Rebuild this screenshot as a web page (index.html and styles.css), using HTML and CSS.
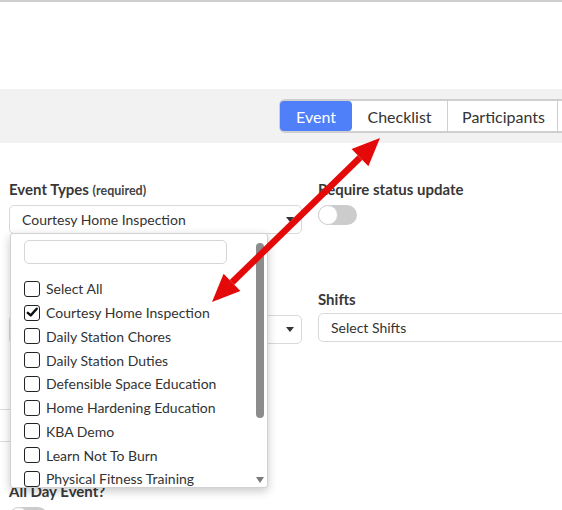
FILE: index.html
```html
<!DOCTYPE html>
<html lang="en">
<head>
<meta charset="utf-8">
<title>Event</title>
<link rel="stylesheet" href="styles.css">
</head>
<body>
<div class="topline"></div>
<div class="header"></div>
<div class="toolbar">
  <div class="tabs">
    <div class="tab active">Event</div>
    <div class="tab t-check">Checklist</div>
    <div class="tab divided t-part">Participants</div>
    <div class="tab divided t-more"></div>
  </div>
</div>
<div class="form">
  <div class="col">
    <div class="field first">
      <div class="label">Event Types <span class="req">(required)</span></div>
      <div class="select"><span>Courtesy Home Inspection</span><span class="caret"></span></div>
      <div class="dropdown">
        <div class="search"></div>
        <ul class="options">
          <li><span class="cb"></span>Select All</li>
          <li><span class="cb checked"><svg viewBox="0 0 16 16" width="13" height="13"><path d="M2.2 8.4 L5.8 11.6 L13.2 3.4" fill="none" stroke="#111" stroke-width="3" stroke-linecap="round" stroke-linejoin="round"/></svg></span>Courtesy Home Inspection</li>
          <li><span class="cb"></span>Daily Station Chores</li>
          <li><span class="cb"></span>Daily Station Duties</li>
          <li><span class="cb"></span>Defensible Space Education</li>
          <li><span class="cb"></span>Home Hardening Education</li>
          <li><span class="cb"></span>KBA Demo</li>
          <li><span class="cb"></span>Learn Not To Burn</li>
          <li><span class="cb"></span>Physical Fitness Training</li>
        </ul>
        <div class="scroll-thumb"></div>
        <div class="scroll-down"></div>
      </div>
    </div>
    <div class="field second">
      <div class="label">&nbsp;</div>
      <div class="select"><span class="caret"></span></div>
    </div>
    <div class="rule"></div>
    <div class="field allday">
      <div class="label">All Day Event?</div>
      <div class="toggle"><span class="knob"></span></div>
    </div>
  </div>
  <div class="col">
    <div class="field first">
      <div class="label">Require status update</div>
      <div class="toggle"><span class="knob"></span></div>
    </div>
    <div class="field shifts">
      <div class="label">Shifts</div>
      <div class="select"><span>Select Shifts</span></div>
    </div>
  </div>
</div>
<svg class="annot" width="562" height="510" viewBox="0 0 562 510">
  <line x1="360" y1="157.6" x2="232" y2="282.4" stroke="#e40a0a" stroke-width="6.5"/>
  <polygon points="380,138 368.4,166.2 351.6,149" fill="#e40a0a"/>
  <polygon points="212,302 240.4,291 223.6,273.8" fill="#e40a0a"/>
</svg>
</body>
</html>
```
FILE: styles.css
```css
html, body {
  margin: 0;
  padding: 0;
}
body {
  width: 562px;
  height: 510px;
  overflow: hidden;
  position: relative;
  background: #fff;
  font-family: Lato, "Open Sans", sans-serif;
  color: #333;
}
.topline {
  height: 2px;
  background: #cfcfcf;
}
.header {
  height: 87px;
}
.toolbar {
  height: 54px;
  box-sizing: border-box;
  background: #f2f2f2;
  padding: 10px 0 0 279px;
  white-space: nowrap;
  overflow: hidden;
}
.tabs {
  display: inline-flex;
  height: 34px;
  box-sizing: border-box;
  border: 2px solid #cfcfcf;
  border-radius: 6px;
  background: #fff;
}
.tab {
  display: flex;
  align-items: center;
  justify-content: center;
  box-sizing: border-box;
  padding: 0 14px;
  font-size: 16px;
  color: #333;
}
.tab.divided {
  border-left: 1px solid #cfcfcf;
}
.tab.active {
  background: #4f80f9;
  color: #fff;
  border-radius: 4px;
  width: 72px;
  padding: 0;
  margin-left: -1px;
}
.t-check {
  width: 95px;
  padding: 0;
}
.t-part {
  width: 110px;
  padding: 0 0 0 2px;
}
.t-more {
  width: 40px;
  padding: 0;
}
.form {
  display: grid;
  grid-template-columns: 293px 293px;
  column-gap: 16px;
  padding: 37px 0 0 9px;
}
.col {
  display: flex;
  flex-direction: column;
}
.field {
  display: flex;
  flex-direction: column;
  align-items: flex-start;
}
.field.first {
  position: relative;
  z-index: 5;
}
.label {
  font-size: 15px;
  font-weight: 700;
  line-height: 18px;
  color: #383838;
  margin-bottom: 5px;
}
.req {
  font-size: 12.5px;
  font-weight: 700;
  color: #444;
}
.select {
  align-self: stretch;
  height: 29px;
  box-sizing: border-box;
  border: 1px solid #d9d9d9;
  border-radius: 5px;
  padding: 0 7px 0 12px;
  display: flex;
  align-items: center;
  font-size: 14px;
  color: #333;
}
.caret {
  margin-left: auto;
  width: 0;
  height: 0;
  border-left: 4px solid transparent;
  border-right: 4px solid transparent;
  border-top: 5px solid #333;
}
.second {
  margin-top: 58px;
}
.shifts {
  margin-top: 65px;
}
.shifts .select {
  margin-right: -40px;
}
.toggle {
  width: 39px;
  height: 20px;
  border-radius: 10px;
  background: #cccccc;
  margin-top: 2px;
  position: relative;
}
.knob {
  display: block;
  width: 20px;
  height: 20px;
  box-sizing: border-box;
  border-radius: 50%;
  background: #fff;
  border: 1px solid #d4d4d4;
}
.rule {
  margin: 65px 0 0 -9px;
  width: 260px;
  height: 31px;
  border-top: 1px solid #dcdcdc;
  border-bottom: 1px solid #dcdcdc;
}
.allday {
  margin-top: 40px;
}
.dropdown {
  position: absolute;
  left: 1px;
  top: 53px;
  width: 258px;
  height: 255px;
  box-sizing: border-box;
  border: 1px solid #d2d2d2;
  border-radius: 3px;
  background: #fff;
  box-shadow: 0 3px 10px rgba(0, 0, 0, 0.22);
  padding: 6px 0 0 13px;
  overflow: hidden;
}
.search {
  width: 203px;
  height: 24px;
  box-sizing: border-box;
  border: 1px solid #d6d6d6;
  border-radius: 5px;
}
.options {
  list-style: none;
  margin: 13px 0 0;
  padding: 0;
}
.options li {
  height: 23.75px;
  display: flex;
  align-items: center;
  gap: 6px;
  font-size: 14px;
  color: #333;
  white-space: nowrap;
}
.cb {
  width: 16px;
  height: 16px;
  box-sizing: border-box;
  border: 1.5px solid #222;
  border-radius: 3px;
  display: flex;
  align-items: center;
  justify-content: center;
  flex: none;
}
.scroll-thumb {
  position: absolute;
  right: 3px;
  top: 9px;
  width: 8px;
  height: 175px;
  border-radius: 4px;
  background: #8c8c8c;
}
.scroll-down {
  position: absolute;
  right: 3px;
  bottom: 4px;
  width: 0;
  height: 0;
  border-left: 4px solid transparent;
  border-right: 4px solid transparent;
  border-top: 6px solid #7a7a7a;
}
.annot {
  position: absolute;
  left: 0;
  top: 0;
  pointer-events: none;
  z-index: 10;
}
```
